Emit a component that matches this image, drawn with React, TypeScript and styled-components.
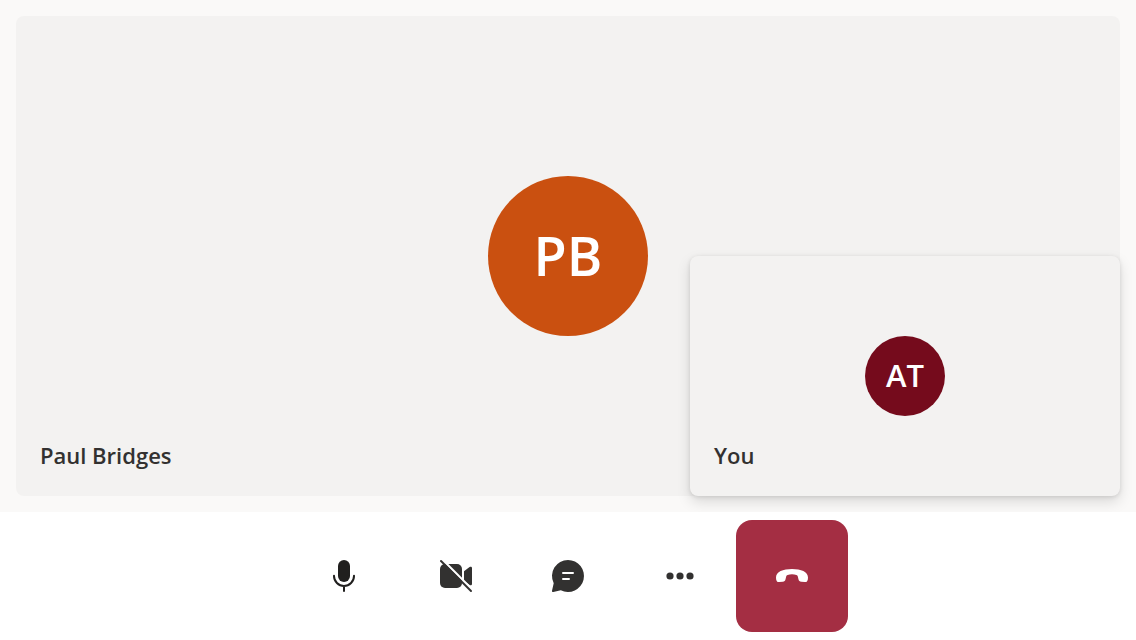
import React from "react";
import styled, { createGlobalStyle } from "styled-components";

const GlobalStyle = createGlobalStyle`
  *, *::before, *::after { box-sizing: border-box; }
  body {
    margin: 0;
    background: #ffffff;
    color: #323130;
    font-family: "Segoe UI", "Open Sans", "Noto Sans", sans-serif;
  }
`;

const Call = styled.main`
  display: flex;
  flex-direction: column;
  min-height: 100vh;
`;

const Stage = styled.section`
  position: relative;
  flex: 1;
  display: flex;
  padding: 16px;
  overflow: hidden;
  background: #faf9f8;
`;

const Tile = styled.article`
  display: grid;
  grid-template: 1fr / 1fr;
  border-radius: 8px;
  background: #f3f2f1;
`;

const RemoteTile = styled(Tile)`
  flex: 1;
`;

const LocalTile = styled(Tile)`
  position: absolute;
  right: 16px;
  bottom: 16px;
  width: 430px;
  height: 240px;
  box-shadow: 0 6px 14px rgba(0, 0, 0, 0.13), 0 1px 4px rgba(0, 0, 0, 0.11);
`;

const Avatar = styled.div<{ $size: number; $text: number; $color: string }>`
  grid-area: 1 / 1;
  place-self: center;
  display: flex;
  align-items: center;
  justify-content: center;
  width: ${(p) => p.$size}px;
  height: ${(p) => p.$size}px;
  padding-bottom: 2px;
  border-radius: 50%;
  background: ${(p) => p.$color};
  color: #ffffff;
  font-size: ${(p) => p.$text}px;
  font-weight: 600;
  line-height: 1;
`;

const Name = styled.span`
  grid-area: 1 / 1;
  place-self: end start;
  padding: 24px;
  font-size: 22px;
  font-weight: 600;
  line-height: 34px;
`;

const ControlBar = styled.div`
  display: flex;
  justify-content: center;
  padding: 8px;
  background: #ffffff;
`;

const ControlButton = styled.button<{ $danger?: boolean }>`
  display: flex;
  align-items: center;
  justify-content: center;
  width: 112px;
  height: 112px;
  padding: 0;
  border: 0;
  border-radius: 16px;
  background: ${(p) => (p.$danger ? "#a42e43" : "transparent")};
  color: ${(p) => (p.$danger ? "#ffffff" : "#323130")};
  cursor: pointer;
`;

const Icon = styled.svg`
  display: block;
  width: 32px;
  height: 32px;
  fill: currentColor;
  overflow: visible;
`;

const MicIcon = () => (
  <Icon viewBox="0 0 32 32" aria-hidden="true" color="#201f1e">
    <rect x="10" y="0" width="12" height="22" rx="6" />
    <path
      d="M6 15.8v.2a10 10 0 0 0 20 0v-.2M16 26v5"
      fill="none"
      stroke="currentColor"
      strokeWidth="2"
      strokeLinecap="round"
    />
  </Icon>
);

const CameraOffIcon = () => (
  <Icon viewBox="0 0 32 32" aria-hidden="true">
    <rect x="0" y="4" width="22" height="24" rx="5" />
    <path d="M24 11.2 29.6 7c1-.7 2.4-.2 2.4 1.1v15.8c0 1.3-1.4 1.8-2.4 1.1L24 20.8Z" />
    <path d="M2.4-.4 33 30.2" stroke="#ffffff" strokeWidth="2.2" />
    <path d="M1 1 31 31" stroke="currentColor" strokeWidth="2" strokeLinecap="round" />
  </Icon>
);

const ChatIcon = () => (
  <Icon viewBox="0 0 32 32" aria-hidden="true">
    <path d="M16 0a16 16 0 1 1-7.2 30.3L1.3 32A1.1 1.1 0 0 1 0 30.7l1.7-7.5A16 16 0 0 1 16 0Z" />
    <path
      d="M11 13h10M11 19h6"
      stroke="#ffffff"
      strokeWidth="2"
      strokeLinecap="round"
    />
  </Icon>
);

const MoreIcon = () => (
  <Icon viewBox="0 0 32 32" aria-hidden="true">
    <circle cx="6" cy="16" r="3.6" />
    <circle cx="16" cy="16" r="3.6" />
    <circle cx="26" cy="16" r="3.6" />
  </Icon>
);

const HangUpIcon = () => (
  <Icon viewBox="0 0 32 32" aria-hidden="true">
    <path d="M16 9C25 9 32 11.8 32 17.4c0 3.2-1 4.9-3.3 4.7l-3.4-.3c-1.7-.2-2.5-1.1-2.9-2.8l-.6-2.5c-.2-.9-.6-1.3-1.4-1.6-2.6-1-6.2-1-8.8 0-.8.3-1.2.7-1.4 1.6L9.6 19c-.4 1.7-1.2 2.6-2.9 2.8l-3.4.3C1 22.3 0 20.6 0 17.4 0 11.8 7 9 16 9Z" />
  </Icon>
);

export default function App() {
  return (
    <>
      <GlobalStyle />
      <Call>
        <Stage aria-label="Participants">
          <RemoteTile>
            <Avatar $size={160} $text={54} $color="#ca5010">PB</Avatar>
            <Name>Paul Bridges</Name>
          </RemoteTile>
          <LocalTile>
            <Avatar $size={80} $text={31} $color="#750b1c">AT</Avatar>
            <Name>You</Name>
          </LocalTile>
        </Stage>
        <ControlBar role="toolbar" aria-label="Call controls">
          <ControlButton type="button" aria-label="Mute"><MicIcon /></ControlButton>
          <ControlButton type="button" aria-label="Turn camera on"><CameraOffIcon /></ControlButton>
          <ControlButton type="button" aria-label="Chat"><ChatIcon /></ControlButton>
          <ControlButton type="button" aria-label="More options"><MoreIcon /></ControlButton>
          <ControlButton type="button" aria-label="Leave call" $danger><HangUpIcon /></ControlButton>
        </ControlBar>
      </Call>
    </>
  );
}
